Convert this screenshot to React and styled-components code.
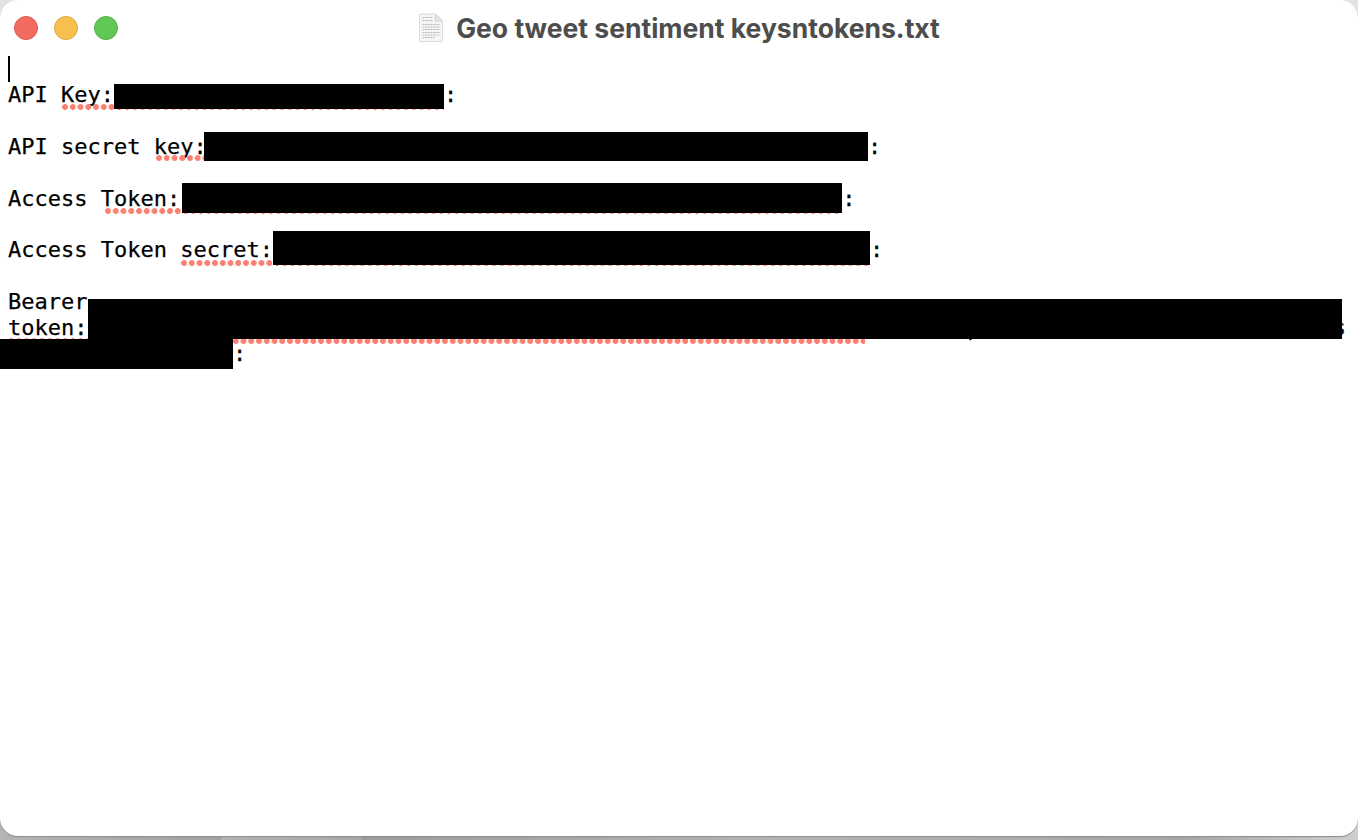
import React from 'react';
import styled, { createGlobalStyle } from 'styled-components';

const Global = createGlobalStyle`
    html, body {
        margin: 0;
        padding: 0;
        height: 100%;
        overflow: hidden;
    }

    body {
        background:
            linear-gradient(180deg, #e2e2e2 0, #e2e2e2 40px, transparent 40px),
            linear-gradient(90deg, #b4b4b4 0px, #a2a2a2 220px, #b2b2b2 222px, #a8a8a8 361px, #9c9c9c 362px, #b4b4b4 770px, #a6a6a6 1180px, #cfcfcf 1358px);
    }
`;

const Window = styled.div`
    height: 836px;
    background: #fff;
    border-radius: 18px;
    box-shadow: 0 1px 1px #8c8c8c;
    overflow: hidden;
`;

const TitleBar = styled.header`
    height: 55.5px;
    padding: 0 14px;
    box-sizing: border-box;
    display: grid;
    grid-template-columns: 1fr auto 1fr;
    align-items: center;
`;

const Lights = styled.div`
    display: flex;
    gap: 16px;
`;

const Light = styled.span`
    width: 24px;
    height: 24px;
    box-sizing: border-box;
    border-radius: 50%;
    background: ${p => p.$fill};
    border: 1px solid ${p => p.$edge};
`;

const Title = styled.div`
    display: flex;
    align-items: center;
    gap: 12px;
    font-family: Inter, "Liberation Sans", sans-serif;
    font-size: 26.5px;
    font-weight: 700;
    color: #4d4d4d;
    white-space: nowrap;
`;

const Editor = styled.main`
    padding: 0 8px;
    font-family: "DejaVu Sans Mono", "Liberation Mono", monospace;
    font-size: 22px;
    color: #000;
    -webkit-text-stroke: 0.25px #000;
`;

const Line = styled.div`
    display: flex;
    height: 25.85px;
    line-height: 28.5px;
    white-space: pre;
    margin-bottom: ${p => (p.$para ? '25.85px' : '0')};
`;

const Caret = styled.span`
    width: 1.5px;
    height: 26px;
    background: #000;
`;

const Misspelt = styled.span`
    position: relative;
    display: flex;
    width: ${p => (p.$width ? `${p.$width}px` : 'auto')};

    &::after {
        content: "";
        position: absolute;
        left: ${p => p.$dotsLeft || 0}px;
        right: 0;
        top: ${p => p.$dotsTop}px;
        height: 6px;
        background: radial-gradient(circle at 3px 3px, #fa8072 2.7px, transparent 3.1px) 0 0 / 7.75px 6px repeat-x;
    }
`;

const Redacted = styled.span`
    position: relative;
    z-index: 1;
    flex: none;
    background: #000;
    width: ${p => p.$w}px;
    height: ${p => p.$h}px;
    margin-top: ${p => p.$top}px;
    margin-left: ${p => p.$left || 0}px;
`;

const Peek = styled.span`
    margin-left: ${p => p.$left};
    margin-right: ${p => p.$right || '0'};
    margin-top: ${p => p.$drop || '0'};
`;

function DocIcon() {
    return (
        <svg width="26" height="30" viewBox="0 0 26 30">
            <path d="M1.5 1h16l7 7v20.5H1.5z" fill="#f5f5f5" stroke="#dcdcdc" />
            <path d="M17.5 1v7h7z" fill="#e6e6e6" stroke="#d2d2d2" />
            <path d="M4.5 4.5h10M4.5 7.5h10M4.5 11.5h17M4.5 14h17M4.5 16.5h17M4.5 19.5h17M4.5 22h17M4.5 24.5h12" stroke="#bcbcbc" strokeWidth="1.1" strokeDasharray="2 .6" fill="none" />
        </svg>
    );
}

export default function App() {
    return (
        <>
            <Global />
            <Window>
                <TitleBar>
                    <Lights>
                        <Light $fill="#f26b60" $edge="#dc5a50" />
                        <Light $fill="#f7c04f" $edge="#e0a640" />
                        <Light $fill="#60c855" $edge="#4fae48" />
                    </Lights>
                    <Title>
                        <DocIcon />
                        Geo tweet sentiment keysntokens.txt
                    </Title>
                </TitleBar>
                <Editor>
                    <Line><Caret /></Line>
                    <Line $para>
                        API{' '}
                        <Misspelt $dotsTop={22.3} $dotsLeft={1}>
                            Key:
                            <Redacted $w={330} $h={25} $top={2.6} />
                        </Misspelt>
                        :
                    </Line>
                    <Line $para>
                        API secret{' '}
                        <Misspelt $dotsTop={22} $dotsLeft={2}>
                            key:
                            <Redacted $w={664} $h={29} $top={-1} $left={-2.6} />
                        </Misspelt>
                        :
                    </Line>
                    <Line $para>
                        Access{' '}
                        <Misspelt $dotsTop={23} $dotsLeft={4}>
                            Token:
                            <Redacted $w={660} $h={30} $top={-1.8} $left={2} />
                        </Misspelt>
                        :
                    </Line>
                    <Line $para>
                        Access Token{' '}
                        <Misspelt $dotsTop={24} $dotsLeft={1}>
                            secret:
                            <Redacted $w={597} $h={34} $top={-5.5} />
                        </Misspelt>
                        :
                    </Line>
                    <Line>
                        Bearer
                        <Redacted $w={1254} $h={40} $top={10.8} $left={0.6} />
                    </Line>
                    <Line>
                        <Misspelt $width={857} $dotsTop={24}>
                            token:
                            <Peek $left="329px">g</Peek>
                            <Peek $left="339px">g</Peek>
                        </Misspelt>
                        <Peek $left="100px" $drop="2px">,</Peek>
                        <Peek $left="auto" $right="4px">s</Peek>
                    </Line>
                    <Line>
                        <Redacted $w={233} $h={30} $top={-1} $left={-8} />
                        :
                    </Line>
                </Editor>
            </Window>
        </>
    );
}
